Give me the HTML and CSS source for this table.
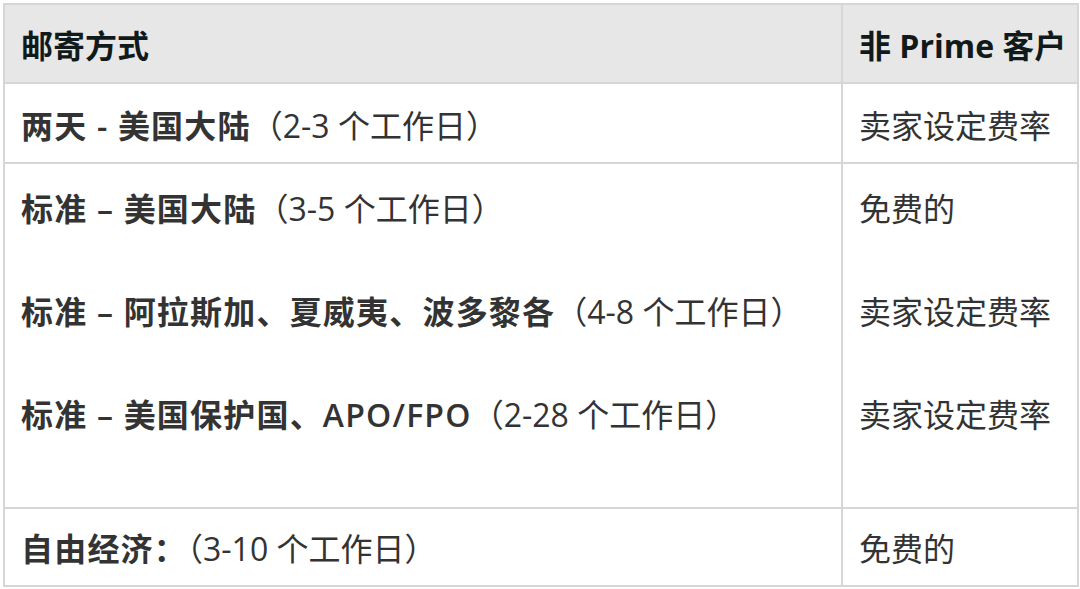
FILE: index.html
```html
<!DOCTYPE html>
<html lang="zh-CN">
<head>
<meta charset="utf-8">
<title>邮寄方式</title>
<link rel="stylesheet" href="styles.css">
</head>
<body>
<table class="ship">
  <thead>
    <tr class="head-row">
      <th class="col-method">邮寄方式</th>
      <th class="col-fee">非 Prime 客户</th>
    </tr>
  </thead>
  <tbody>
    <tr class="row row-one">
      <td class="col-method"><div class="line"><b>两天 - 美国大陆</b>（2-3 个工作日）</div></td>
      <td class="col-fee"><div class="line">卖家设定费率</div></td>
    </tr>
    <tr class="row row-multi">
      <td class="col-method">
        <div class="stack">
          <div class="line"><b>标准 – 美国大陆</b>（3-5 个工作日）</div>
          <div class="line"><b>标准 – 阿拉斯加、夏威夷、波多黎各</b>（4-8 个工作日）</div>
          <div class="line"><b>标准 – 美国保护国、APO/FPO</b>（2-28 个工作日）</div>
        </div>
      </td>
      <td class="col-fee">
        <div class="stack">
          <div class="line">免费的</div>
          <div class="line">卖家设定费率</div>
          <div class="line">卖家设定费率</div>
        </div>
      </td>
    </tr>
    <tr class="row row-last">
      <td class="col-method"><div class="line"><b>自由经济：</b>（3-10 个工作日）</div></td>
      <td class="col-fee"><div class="line">免费的</div></td>
    </tr>
  </tbody>
</table>
</body>
</html>
```

FILE: styles.css
```css
html, body {
  margin: 0;
  padding: 0;
  background: #ffffff;
}

body {
  font-family: "Open Sans", "Noto Sans CJK SC", sans-serif;
  font-size: 32px;
  color: #333333;
}

.ship {
  margin: 3px 0 0 3px;
  width: 1074px;
  border-collapse: collapse;
  table-layout: fixed;
}

.ship th,
.ship td {
  border: 2px solid #d6d6d6;
  text-align: left;
  vertical-align: top;
  padding: 0 0 0 16px;
  box-sizing: border-box;
}

.col-method {
  width: 838px;
}

.col-fee {
  width: 236px;
}

.head-row th {
  background: #e7e7e7;
  font-weight: 700;
  color: #111a1a;
  height: 79px;
  padding-top: 19px;
  line-height: 44px;
}

.line {
  line-height: 44px;
  white-space: nowrap;
}

.line b {
  font-weight: 600;
  color: #333333;
  letter-spacing: 1.2px;
}

.row-one td {
  height: 80px;
  padding-top: 20px;
}

.row-multi td {
  height: 345px;
  padding-top: 23px;
}

.stack {
  display: flex;
  flex-direction: column;
  gap: 59px;
}

.row-last td {
  height: 78px;
  padding-top: 18px;
}
```
